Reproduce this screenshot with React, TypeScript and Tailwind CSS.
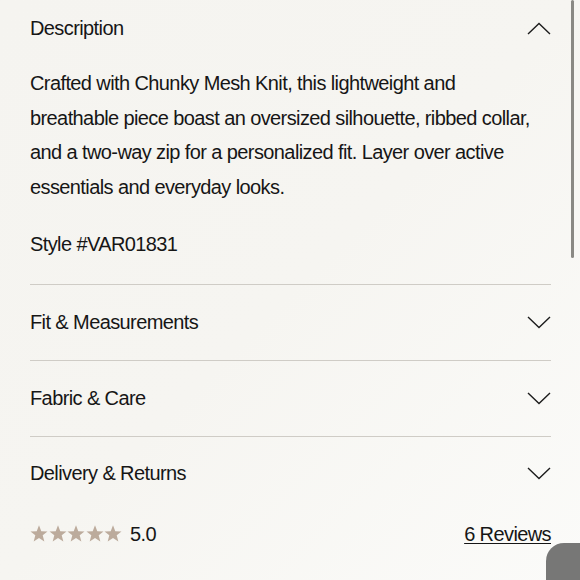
import React from "react";

const font = { fontFamily: '"Liberation Sans", Arial, sans-serif' };

function Chevron({ up }: { up?: boolean }) {
  return (
    <svg width="24" height="13" viewBox="0 0 24 13" fill="none" className="shrink-0">
      <polyline
        points={up ? "1,12 12,1.5 23,12" : "1,1 12,11.5 23,1"}
        stroke="#1c1c1c"
        strokeWidth="1.4"
        strokeLinejoin="miter"
      />
    </svg>
  );
}

function Star() {
  return (
    <svg width="18" height="17" viewBox="0 0 24 23">
      <polygon
        points="12,0.5 15.1,8.3 23.5,8.7 17,14 19.2,22.3 12,17.6 4.8,22.3 7,14 0.5,8.7 8.9,8.3"
        fill="#bcab9c"
      />
    </svg>
  );
}

const sections = ["Fit & Measurements", "Fabric & Care", "Delivery & Returns"];

export default function App() {
  return (
    <div
      className="relative w-[580px] h-[580px] overflow-hidden bg-gradient-to-br from-[#f5f4f0] via-[#f6f5f1] to-[#fbfbf9] text-[#161616] text-[20px] tracking-[-0.03em]"
      style={font}
    >
      <div className="pl-[30px] pr-[29px]">
        <div className="flex h-[56px] items-center justify-between">
          <span>Description</span>
          <Chevron up />
        </div>
        <p className="mt-[10px] leading-[34.5px]">
          Crafted with Chunky Mesh Knit, this lightweight and
          <br />
          breathable piece boast an oversized silhouette, ribbed collar,
          <br />
          and a two-way zip for a personalized fit. Layer over active
          <br />
          essentials and everyday looks.
        </p>
        <p className="mt-[23px] pb-[22px] leading-[34.5px]">Style #VAR01831</p>

        {sections.map((title, i) => (
          <div
            key={title}
            className={`flex items-center justify-between border-t-[1.5px] border-[#cfccc6] ${
              i === sections.length - 1 ? "h-[74px]" : "h-[76px]"
            }`}
          >
            <span>{title}</span>
            <Chevron />
          </div>
        ))}

        <div className="flex h-[48px] items-center justify-between">
          <div className="flex items-center">
            <div className="flex gap-[0.5px]">
              <Star />
              <Star />
              <Star />
              <Star />
              <Star />
            </div>
            <span className="ml-[8px]">5.0</span>
          </div>
          <a className="underline underline-offset-[2px] decoration-[1.2px]">6 Reviews</a>
        </div>
      </div>

      {/* scrollbar */}
      <div className="absolute left-[571px] top-0 h-[258px] w-[3px] rounded-full bg-[#8a8984]" />
      {/* floating chat button, cut off */}
      <div className="absolute left-[546px] top-[543px] h-[70px] w-[70px] rounded-[18px] bg-[#777776]" />
    </div>
  );
}
